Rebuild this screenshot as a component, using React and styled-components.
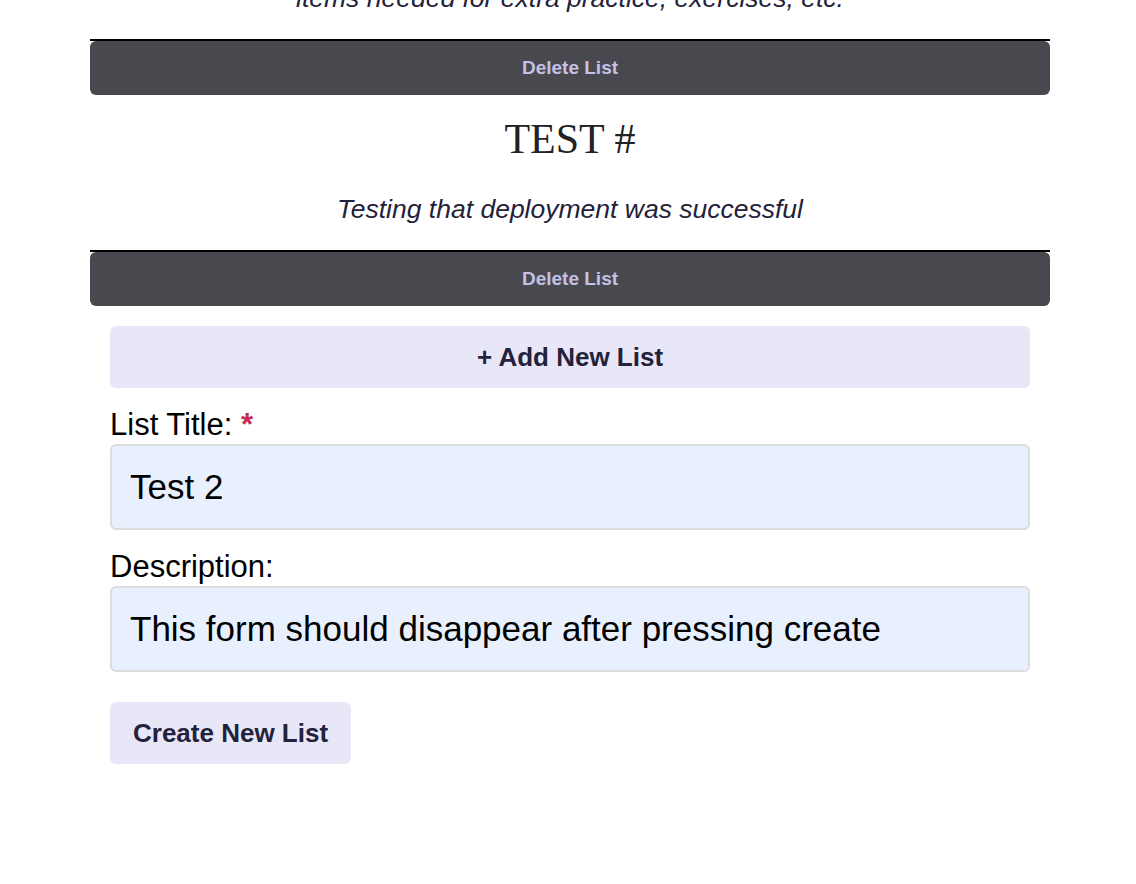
import React, { useState } from 'react';
import styled, { createGlobalStyle } from 'styled-components';

const GlobalStyle = createGlobalStyle`
  body {
    margin: 0;
    background: #fff;
    font-family: "Liberation Sans", Arial, sans-serif;
    overflow: hidden;
  }
`;

const lists = [
    { id: 1, title: 'Extra Practice', description: 'items needed for extra practice, exercises, etc.', partial: true },
    { id: 2, title: 'TEST #', description: 'Testing that deployment was successful' },
];

const App = () => {
    const [title, setTitle] = useState('Test 2');
    const [description, setDescription] = useState('This form should disappear after pressing create');

    return (
        <Page>
            <GlobalStyle />
            {lists.map(list => (
                <ListCard key={list.id}>
                    {!list.partial && <ListTitle>{list.title}</ListTitle>}
                    <ListDesc $partial={list.partial}>{list.description}</ListDesc>
                    <CardFooter>
                        <DeleteButton>Delete List</DeleteButton>
                    </CardFooter>
                </ListCard>
            ))}
            <NewListSection>
                <AddButton>+ Add New List</AddButton>
                <form onSubmit={e => e.preventDefault()}>
                    <Label htmlFor='list-title'>
                        List Title: <Required>*</Required>
                    </Label>
                    <TextInput id='list-title' value={title} onChange={e => setTitle(e.target.value)} />
                    <Label htmlFor='list-desc'>Description:</Label>
                    <TextInput id='list-desc' value={description} onChange={e => setDescription(e.target.value)} />
                    <CreateButton type='submit'>Create New List</CreateButton>
                </form>
            </NewListSection>
        </Page>
    );
};

const Page = styled.main`
  width: 960px;
  margin: 0 0 0 90px;
`;

const ListCard = styled.section`
  display: flex;
  flex-direction: column;
  align-items: stretch;
  text-align: center;
`;

const ListTitle = styled.h2`
  margin: 20px 0 0;
  font-family: "Liberation Serif", "Times New Roman", serif;
  font-weight: 400;
  font-size: 42px;
  line-height: 48px;
  color: #222;
`;

const ListDesc = styled.p`
  margin: ${p => (p.$partial ? '-17px 0 26px' : '31px 0 26px')};
  font-style: italic;
  font-size: 26.5px;
  line-height: 30px;
  color: #23223a;
`;

const CardFooter = styled.div`
  border-top: 2px solid #000;
`;

const DeleteButton = styled.button`
  display: block;
  width: 100%;
  height: 54px;
  border: none;
  border-radius: 6px;
  background: #48494f;
  color: #c4c1e4;
  font-family: "Liberation Sans", Arial, sans-serif;
  font-weight: 700;
  font-size: 19px;
  cursor: pointer;
`;

const NewListSection = styled.div`
  padding: 20px 20px 0;
`;

const AddButton = styled.button`
  display: block;
  width: 100%;
  height: 62px;
  border: none;
  border-radius: 6px;
  background: #e8e7f8;
  color: #23223a;
  font-family: "Liberation Sans", Arial, sans-serif;
  font-weight: 700;
  font-size: 26px;
  cursor: pointer;
`;

const Label = styled.label`
  display: block;
  margin: 20px 0 2px;
  font-size: 31px;
  line-height: 34px;
  color: #000;
`;

const Required = styled.span`
  color: #c62c55;
  font-weight: 700;
`;

const TextInput = styled.input`
  display: block;
  box-sizing: border-box;
  width: 100%;
  height: 86px;
  padding: 0 18px;
  border: 2px solid #dcdcdc;
  border-radius: 6px;
  background: #e8f0fe;
  color: #000;
  font-family: "Liberation Sans", Arial, sans-serif;
  font-size: 35px;
  outline: none;
`;

const CreateButton = styled.button`
  display: block;
  height: 62px;
  margin-top: 30px;
  padding: 0 23px;
  border: none;
  border-radius: 6px;
  background: #e8e7f8;
  color: #23223a;
  font-family: "Liberation Sans", Arial, sans-serif;
  font-weight: 700;
  font-size: 26px;
  cursor: pointer;
`;

export default App;
